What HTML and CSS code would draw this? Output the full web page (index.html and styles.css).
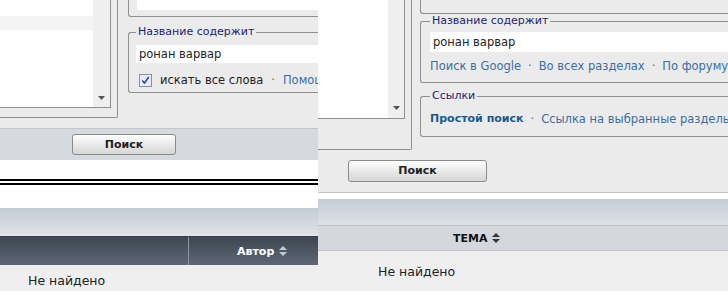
FILE: index.html
```html
<!doctype html>
<html>
<head>
<meta charset="utf-8" />
<title>Поиск</title>
<link rel="stylesheet" href="styles.css">
</head>
<body>
	<div class="page">
		<!-- первый снимок -->
		<div class="shot shot-a">
			<div class="search-top">
				<div class="forum-box">
					<div class="forum-list">
						<div class="forum-items"><div class="forum-row"></div></div>
						<div class="forum-scroll">
							<svg width="7" height="4" viewBox="0 0 7 4"><path d="M0 0h7L3.5 4z" fill="#555"/></svg>
						</div>
					</div>
				</div>
				<div class="fields">
					<div class="field-prev"><div class="prev-input"></div></div>
					<fieldset class="field field-name">
						<legend>Название содержит</legend>
						<input class="text" type="text" value="ронан варвар">
						<div class="opts">
							<svg class="check" width="13" height="13" viewBox="0 0 13 13"><rect x=".5" y=".5" width="12" height="12" fill="#e9edf3" stroke="#8193a8"/><path d="M3.2 6.6l2.3 2.4 4.3-6" fill="none" stroke="#2c48a0" stroke-width="1.6"/></svg>
							<span>искать все слова</span><span class="dot">·</span><a href="javascript:;">Помощь</a>
						</div>
					</fieldset>
				</div>
			</div>
			<div class="btn-bar"><a class="btn" href="javascript:;">Поиск</a></div>
			<div class="white-band"><div class="dbl-line"></div></div>
			<div class="grad-band"></div>
			<div class="thead thead-dark">
				<div class="th th-first"></div>
				<div class="th th-author">Автор <svg width="8" height="10" viewBox="0 0 8 10"><path d="M4 0L8 4H0zM0 6h8L4 10z" fill="#c4cad1"/></svg></div>
			</div>
			<div class="empty">Не найдено</div>
		</div>

		<!-- второй снимок -->
		<div class="shot shot-b">
			<div class="search-top">
				<div class="forum-box">
					<div class="forum-list">
						<div class="forum-items"></div>
						<div class="forum-scroll">
							<svg width="7" height="4" viewBox="0 0 7 4"><path d="M0 0h7L3.5 4z" fill="#555"/></svg>
						</div>
					</div>
				</div>
				<div class="fields">
					<div class="field-prev"></div>
					<fieldset class="field field-name">
						<legend>Название содержит</legend>
						<input class="text" type="text" value="ронан варвар">
						<div class="opts">
							<a href="javascript:;">Поиск в Google</a><span class="dot">·</span><a href="javascript:;">Во всех разделах</a><span class="dot">·</span><a href="javascript:;">По форуму</a>
						</div>
					</fieldset>
					<fieldset class="field field-links">
						<legend>Ссылки</legend>
						<div class="opts">
							<a class="strong" href="javascript:;">Простой поиск</a><span class="dot">·</span><a href="javascript:;">Ссылка на выбранные разделы</a>
						</div>
					</fieldset>
				</div>
			</div>
			<div class="btn-bar"><a class="btn" href="javascript:;">Поиск</a></div>
			<div class="white-band"></div>
			<div class="grad-band"></div>
			<div class="thead thead-light">
				<div class="th th-topic">ТЕМА <svg width="8" height="10" viewBox="0 0 8 10"><path d="M4 0L8 4H0zM0 6h8L4 10z" fill="#333"/></svg></div>
			</div>
			<div class="empty">Не найдено</div>
		</div>
	</div>
</body>
</html>
```

FILE: styles.css
```css
body{margin:0; background:#ebebeb; font-family:"DejaVu Sans", Verdana, sans-serif; font-size:11px; color:#222;}
a{color:#3a6ea6; text-decoration:none;}
.page{display:flex; width:728px; height:291px; overflow:hidden;}
.shot{flex:none; height:291px; overflow:hidden; display:flex; flex-direction:column; background:#ebebeb;}
.shot-a{width:318px;}
.shot-b{width:410px;}

/* верх: список разделов + поля */
.search-top{display:flex; align-items:flex-start; flex:none;}
.forum-box{flex:none; box-sizing:border-box; border-right:1px solid #8f8f8f; border-bottom:1px solid #8f8f8f; border-bottom-right-radius:2px;}
.forum-list{display:flex; box-sizing:border-box; border-right:1px solid #8f8f8f; border-bottom:1px solid #8f8f8f;}
.forum-items{background:#fff;}
.forum-row{height:14px; margin-top:16px; background:#f3f3f3;}
.forum-scroll{display:flex; flex-direction:column; justify-content:flex-end; align-items:center; background:#efefef;}
.forum-scroll svg{display:block;}

.shot-a .forum-box{width:118px; height:118px;}
.shot-a .forum-list{width:111px; height:108px;}
.shot-a .forum-items{width:93px;}
.shot-a .forum-scroll{width:17px; padding-bottom:7px;}
.shot-b .forum-box{width:94px; height:150px;}
.shot-b .forum-list{width:87px; height:119px;}
.shot-b .forum-items{width:70px;}
.shot-b .forum-scroll{width:16px; padding-bottom:8px;}

.fields{flex:1; min-width:0;}
.shot-a .fields{margin-left:10px;}
.shot-b .fields{margin-left:8px;}
.field-prev{box-sizing:border-box; border-left:1px solid #8f8f8f; border-bottom:1px solid #8f8f8f; border-bottom-left-radius:3px;}
.shot-a .field-prev{height:17px;}
.shot-b .field-prev{height:14px;}
.prev-input{height:10px; margin-left:8px; background:#fff;}

.field{margin:0; min-width:0; border:1px solid #8f8f8f; border-right:none; border-radius:3px 0 0 3px; white-space:nowrap; overflow:hidden;}
.field legend{padding:0 2px; line-height:16px; font-size:11px; color:#1d1d74;}
.text{display:block; box-sizing:border-box; width:100%; border:none; background:#fff; padding:0 3px; font-family:"DejaVu Sans", Verdana, sans-serif; font-size:11.5px; color:#222; outline:none;}
.opts{display:flex; align-items:center; height:16px; line-height:16px; white-space:nowrap;}
.dot{color:#666; padding:0 8px;}
.strong{font-weight:bold; color:#1c5a8e;}

.shot-a .field-name{margin-top:7px; padding:5px 0 4px 7px;}
.shot-a .text{height:18px;}
.shot-a .opts{margin-top:9px; color:#222; font-size:11.5px;}
.check{flex:none; margin:0 8px 0 3px;}
.shot-b .field-name{margin-top:-1px; padding:3px 0 8px 9px;}
.shot-b .text{height:20px;}
.shot-b .opts{font-size:11.5px;}
.shot-b .dot{padding:0 7px;}
.shot-b .field-name .opts{margin-top:6px;}
.shot-b .field-links{margin-top:5px; padding:7px 0 9px 9px;}
.shot-b .strong{font-size:11px;}

/* кнопка */
.btn{display:block; box-sizing:border-box; border:1px solid #8a8a8a; border-radius:3px; background:linear-gradient(#fefefe, #e6e6e6 60%, #d6d6d6); color:#222; font-weight:bold; font-size:11px; text-align:center;}
.shot-a .btn-bar{flex:none; height:32px; box-sizing:border-box; border-top:1px solid #c3c7cc; background:#d6dadf; padding:5px 0 0 72px; margin-top:10px;}
.shot-a .btn{width:104px; height:21px; line-height:19px;}
.shot-b .btn-bar{flex:none; padding:10px 0 0 30px; height:42px; box-sizing:border-box;}
.shot-b .btn{width:139px; height:22px; line-height:20px;}

/* полосы */
.white-band{flex:none; background:#fff;}
.shot-a .white-band{height:48px;}
.shot-b .white-band{height:6px; border-top:1px solid #c6c6c6;}
.dbl-line{height:2px; margin-top:19px; border-top:2px solid #000; border-bottom:2px solid #000;}
.grad-band{flex:none; background:linear-gradient(#c4ccd4, #dce1e6);}
.shot-a .grad-band{height:26px; border-bottom:2px solid #e2e6ea;}
.shot-b .grad-band{height:26px;}

/* шапка таблицы */
.thead{flex:none; display:flex; box-sizing:border-box;}
.thead-dark{height:29px; background:linear-gradient(#3e4751, #5c6875); border-top:1px solid #363d45;}
.th{display:flex; align-items:center; font-weight:bold;}
.th svg{margin-left:5px;}
.th-first{width:188px; border-right:1px solid #8a96a2;}
.th-author{padding-left:48px; color:#fff;}
.thead-light{height:26px; background:#d4d8dc; border-top:1px solid #bcc1c6; border-bottom:1px solid #c2c6ca;}
.th-topic{padding-left:135px; font-size:11px; color:#111;}

.empty{flex:1; background:#efefef; line-height:16px; font-size:12.5px;}
.shot-a .empty{padding:8px 0 0 28px;}
.shot-b .empty{padding:13px 0 0 60px;}
```
